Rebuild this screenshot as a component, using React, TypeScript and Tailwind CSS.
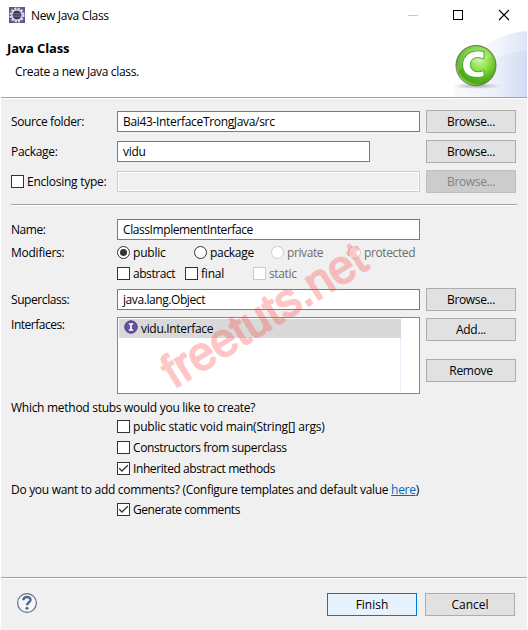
import type { ReactNode } from "react";

type TextProps = { children: ReactNode; className?: string };

function Txt({ children, className = "" }: TextProps) {
  return <span className={`whitespace-pre leading-[16px] ${className}`}>{children}</span>;
}

function Button({ children, className = "" }: TextProps) {
  return (
    <button className={`flex h-[23px] w-[90px] shrink-0 items-center justify-center border leading-[16px] ${className || "border-[#adadad] bg-[#e1e1e1]"}`}>
      {children}
    </button>
  );
}

function Field({ children, className = "" }: { children?: ReactNode; className?: string }) {
  return <div className={`flex h-[21px] shrink-0 items-center border border-[#7a7a7a] bg-white pl-[5px] ${className}`}>{children}</div>;
}

function Check({ checked, disabled }: { checked?: boolean; disabled?: boolean }) {
  return (
    <span className={`block size-[13px] shrink-0 border bg-white ${disabled ? "border-[#cccccc]" : "border-[#333333]"}`}>
      {checked && (
        <svg viewBox="0 0 11 11" className="size-[11px]" fill="none" stroke="#333" strokeWidth="1.3">
          <path d="M1.2 5.2 4 8 9.8 2.2" />
        </svg>
      )}
    </span>
  );
}

function Radio({ checked, disabled }: { checked?: boolean; disabled?: boolean }) {
  return (
    <span className={`flex size-[13px] shrink-0 items-center justify-center rounded-full border bg-white ${disabled ? "border-[#cccccc]" : "border-[#333333]"}`}>
      {checked && <span className="size-[7px] rounded-full bg-[#333333]" />}
    </span>
  );
}

function EclipseIcon() {
  return (
    <svg viewBox="0 0 16 16" className="size-4 shrink-0">
      <rect width="16" height="16" fill="#65548f" />
      <circle cx="8" cy="8" r="6.5" fill="none" stroke="#e6e3ec" strokeWidth="2" strokeDasharray="2 1.4" />
      <circle cx="8" cy="8" r="5.2" fill="#44395c" stroke="#eeeaf5" strokeWidth="1.3" />
      <path d="M4 6.5h8M3.8 8h8.4M4 9.5h8" stroke="#857a9b" strokeWidth=".6" />
    </svg>
  );
}

function Banner() {
  return (
    <svg viewBox="0 0 75 67" className="h-[67px] w-[75px]">
      <defs>
        <linearGradient id="sweep" x1="0" x2="1">
          <stop offset="0" stopColor="#fdfdff" />
          <stop offset=".55" stopColor="#f4f7fd" />
          <stop offset="1" stopColor="#dde6f6" />
        </linearGradient>
        <linearGradient id="low" x1="0" x2="1">
          <stop offset="0" stopColor="#f8faff" />
          <stop offset=".6" stopColor="#ebf0fa" />
          <stop offset="1" stopColor="#d0dcf2" />
        </linearGradient>
        <radialGradient id="ball" cx=".6" cy=".38" r=".65">
          <stop offset="0" stopColor="#c8f5a0" />
          <stop offset=".35" stopColor="#8fe048" />
          <stop offset=".72" stopColor="#52b51b" />
          <stop offset=".88" stopColor="#4da51b" />
          <stop offset="1" stopColor="#92e34b" />
        </radialGradient>
        <radialGradient id="shade">
          <stop offset="0" stopColor="#555" stopOpacity=".5" />
          <stop offset="1" stopColor="#777" stopOpacity="0" />
        </radialGradient>
      </defs>
      <path d="M0 67C5 34 37 3 75 1V67Z" fill="url(#sweep)" />
      <path d="M0 67C13 41 42 23 75 21V67Z" fill="url(#low)" />
      <ellipse cx="25" cy="56" rx="25" ry="3" fill="url(#shade)" />
      <circle cx="24" cy="35.5" r="20" fill="url(#ball)" stroke="#64763f" />
      <path d="M7 27C13 13 33 12 40 27C29 31 16 32 5 42C4 36 5 31 7 27Z" fill="#fff" opacity=".18" />
      <path d="M32 21.5V29C24 26 18.5 28 18.5 34.5S24 43.5 32 40.5V46.5C19 50 10.5 44 10.5 35S19 18.5 32 21.5Z" fill="#fafff7" stroke="#3f9c1e" strokeWidth=".9" />
    </svg>
  );
}

export default function App() {
  return (
    <div className="relative flex h-[630px] w-[528px] flex-col overflow-hidden bg-white font-['Open_Sans','Noto_Sans',sans-serif] text-[12px] text-black">
      <header className="flex h-[30px] shrink-0 items-center pl-[9px]">
        <EclipseIcon />
        <Txt className="relative top-px ml-[6px] tracking-[-0.35px]">New Java Class</Txt>
        <svg viewBox="0 0 102 12" className="ml-auto mr-[18px] h-3 w-[102px]" fill="none" stroke="#000" shapeRendering="crispEdges">
          <path d="M0 6.5h10" stroke="#c8c8c8" />
          <path d="M45.5 1.5h9v9h-9z" />
          <path d="m91 1 10 10m0-10-10 10" shapeRendering="auto" strokeWidth="1.1" />
        </svg>
      </header>

      <section className="flex h-[67px] shrink-0 justify-between pr-px">
        <div className="flex flex-col pt-[10px]">
          <Txt className="pl-[7px] text-[13px] font-bold tracking-[-0.15px]">Java Class</Txt>
          <Txt className="mt-[8px] pl-[15px] tracking-[-0.34px]">Create a new Java class.</Txt>
        </div>
        <Banner />
      </section>

      <main className="mx-px flex h-[480px] w-[526px] shrink-0 flex-col border-t border-[#a0a0a0] bg-[#f0f0f0]">
        <div className="h-px shrink-0 bg-white" />
        <div className="mt-[11px] flex h-[23px] shrink-0 items-center pl-[10px]">
          <Txt className="w-[106px] tracking-[-0.37px]">Source folder:</Txt>
          <Field className="w-[303px] tracking-[-0.33px]">Bai43-InterfaceTrongJava/src</Field>
          <div className="ml-[6px] tracking-[-0.35px]"><Button>Browse...</Button></div>
        </div>
        <div className="mt-[7px] flex h-[23px] shrink-0 items-center pl-[10px]">
          <Txt className="w-[106px] tracking-[-0.3px]">Package:</Txt>
          <Field className="w-[253px] tracking-[-0.3px]">vidu</Field>
          <div className="ml-[56px] tracking-[-0.35px]"><Button>Browse...</Button></div>
        </div>
        <div className="mt-[7px] flex h-[23px] shrink-0 items-center pl-[10px]">
          <Check />
          <Txt className="ml-[3px] w-[90px] tracking-[-0.26px]">Enclosing type:</Txt>
          <div className="h-[21px] w-[303px] border border-[#cccccc] bg-[#f0f0f0] shadow-[inset_0_0_0_1px_#fff]" />
          <div className="ml-[6px] tracking-[-0.35px]"><Button className="border-[#bfbfbf] bg-[#cccccc] text-[#838383]">Browse...</Button></div>
        </div>
        <div className="ml-[10px] mt-[11px] h-[2px] w-[506px] shrink-0 border-b border-t border-b-white border-t-[#a0a0a0]" />
        <div className="mt-[13px] flex h-[21px] shrink-0 items-center pl-[10px]">
          <Txt className="w-[106px] tracking-[-0.45px]">Name:</Txt>
          <Field className="w-[303px] tracking-[-0.42px]">ClassImplementInterface</Field>
        </div>
        <div className="mt-[6px] flex h-[13px] shrink-0 items-center pl-[10px]">
          <Txt className="w-[106px] tracking-[-0.25px]">Modifiers:</Txt>
          <div className="flex w-[77px] items-center gap-[3px]"><Radio checked /><Txt className="tracking-[-0.2px]">public</Txt></div>
          <div className="flex w-[77px] items-center gap-[3px]"><Radio /><Txt className="tracking-[-0.3px]">package</Txt></div>
          <div className="flex w-[77px] items-center gap-[3px] text-[#6d6d6d]"><Radio disabled /><Txt className="tracking-[-0.4px]">private</Txt></div>
          <div className="flex items-center gap-[3px] text-[#6d6d6d]"><Radio disabled /><Txt className="tracking-[-0.38px]">protected</Txt></div>
        </div>
        <div className="mt-[8px] flex h-[13px] shrink-0 items-center pl-[116px]">
          <div className="flex w-[68px] items-center gap-[3px]"><Check /><Txt className="tracking-[-0.45px]">abstract</Txt></div>
          <div className="flex w-[68px] items-center gap-[3px]"><Check /><Txt className="tracking-[-0.2px]">final</Txt></div>
          <div className="flex items-center gap-[3px] text-[#6d6d6d]"><Check disabled /><Txt className="tracking-[-0.35px]">static</Txt></div>
        </div>
        <div className="mt-[8px] flex h-[23px] shrink-0 items-center pl-[10px]">
          <Txt className="w-[106px] tracking-[-0.42px]">Superclass:</Txt>
          <Field className="w-[303px] tracking-[-0.42px]">java.lang.Object</Field>
          <div className="ml-[6px] tracking-[-0.35px]"><Button>Browse...</Button></div>
        </div>
        <div className="mt-[6px] flex h-[77px] shrink-0 items-start pl-[10px]">
          <Txt className="w-[106px] tracking-[-0.47px]">Interfaces:</Txt>
          <div className="flex h-[77px] w-[303px] border border-[#828790] bg-white p-px">
            <div className="w-[282px] border-r border-[#e8f1fc]">
              <div className="flex h-[19px] w-[282px] items-center bg-[#d9d9d9] pl-[5px]">
                <svg viewBox="0 0 14 14" className="-mt-[3px] size-[14px]">
                  <circle cx="7" cy="7" r="6.2" fill="#6452a0" stroke="#493888" />
                  <path d="M4.8 4h4.4M7 4v6M4.8 10h4.4" stroke="#fff" strokeWidth="1.7" />
                </svg>
                <Txt className="ml-[3px] tracking-[-0.33px]">vidu.Interface</Txt>
              </div>
            </div>
          </div>
          <div className="ml-[6px] mt-px flex flex-col gap-[18px] tracking-[-0.3px]"><Button>Add...</Button><Button>Remove</Button></div>
        </div>
        <Txt className="ml-[10px] mt-[6px] shrink-0 tracking-[-0.28px]">Which method stubs would you like to create?</Txt>
        <div className="ml-[116px] mt-[4px] flex shrink-0 flex-col gap-[8px]">
          <div className="flex h-[13px] items-center gap-[3px]"><Check /><Txt className="tracking-[-0.2px]">public static void main(String[] args)</Txt></div>
          <div className="flex h-[13px] items-center gap-[3px]"><Check /><Txt className="tracking-[-0.4px]">Constructors from superclass</Txt></div>
          <div className="flex h-[13px] items-center gap-[3px]"><Check checked /><Txt className="tracking-[-0.41px]">Inherited abstract methods</Txt></div>
        </div>
        <Txt className="ml-[10px] mt-[7px] shrink-0 tracking-[-0.3px]">Do you want to add comments? (Configure templates and default value <a className="text-[#0066cc] underline">here</a>)</Txt>
        <div className="ml-[116px] mt-[5px] flex h-[13px] shrink-0 items-center gap-[3px]"><Check checked /><Txt className="tracking-[-0.45px]">Generate comments</Txt></div>
      </main>

      <footer className="mx-px flex h-[53px] w-[526px] shrink-0 items-start border-t border-[#a0a0a0] bg-[#f0f0f0] shadow-[inset_0_1px_0_#fff] pl-[15px] pt-[14px]">
        <svg viewBox="0 0 22 22" className="size-[22px]">
          <circle cx="11" cy="11" r="9.4" fill="#f7f7f8" stroke="#5c6f91" strokeWidth="1.2" />
          <path d="M7.3 8.3C7.5 3.8 14.9 4 14.5 8.2C14.2 10.5 11 10.5 11 13.2" fill="none" stroke="#526991" strokeWidth="2.5" />
          <circle cx="11" cy="16.2" r="1.5" fill="#526991" />
        </svg>
        <div className="ml-auto mr-[12px] mt-px flex gap-[8px]">
          <Button className="border-[#0078d7] bg-[#e5f1fb]">Finish</Button>
          <Button>Cancel</Button>
        </div>
      </footer>

      <svg viewBox="0 0 528 630" className="pointer-events-none absolute inset-0 h-[630px] w-[528px]">
        <g opacity=".3" transform="translate(174 389) rotate(-31.7)">
          <text textLength="231" lengthAdjust="spacingAndGlyphs" strokeLinejoin="round" className="fill-[#ff4444] stroke-[#ff4444] stroke-[2px] font-['Liberation_Sans',sans-serif] text-[47px]">freetuts.net</text>
        </g>
      </svg>
    </div>
  );
}
